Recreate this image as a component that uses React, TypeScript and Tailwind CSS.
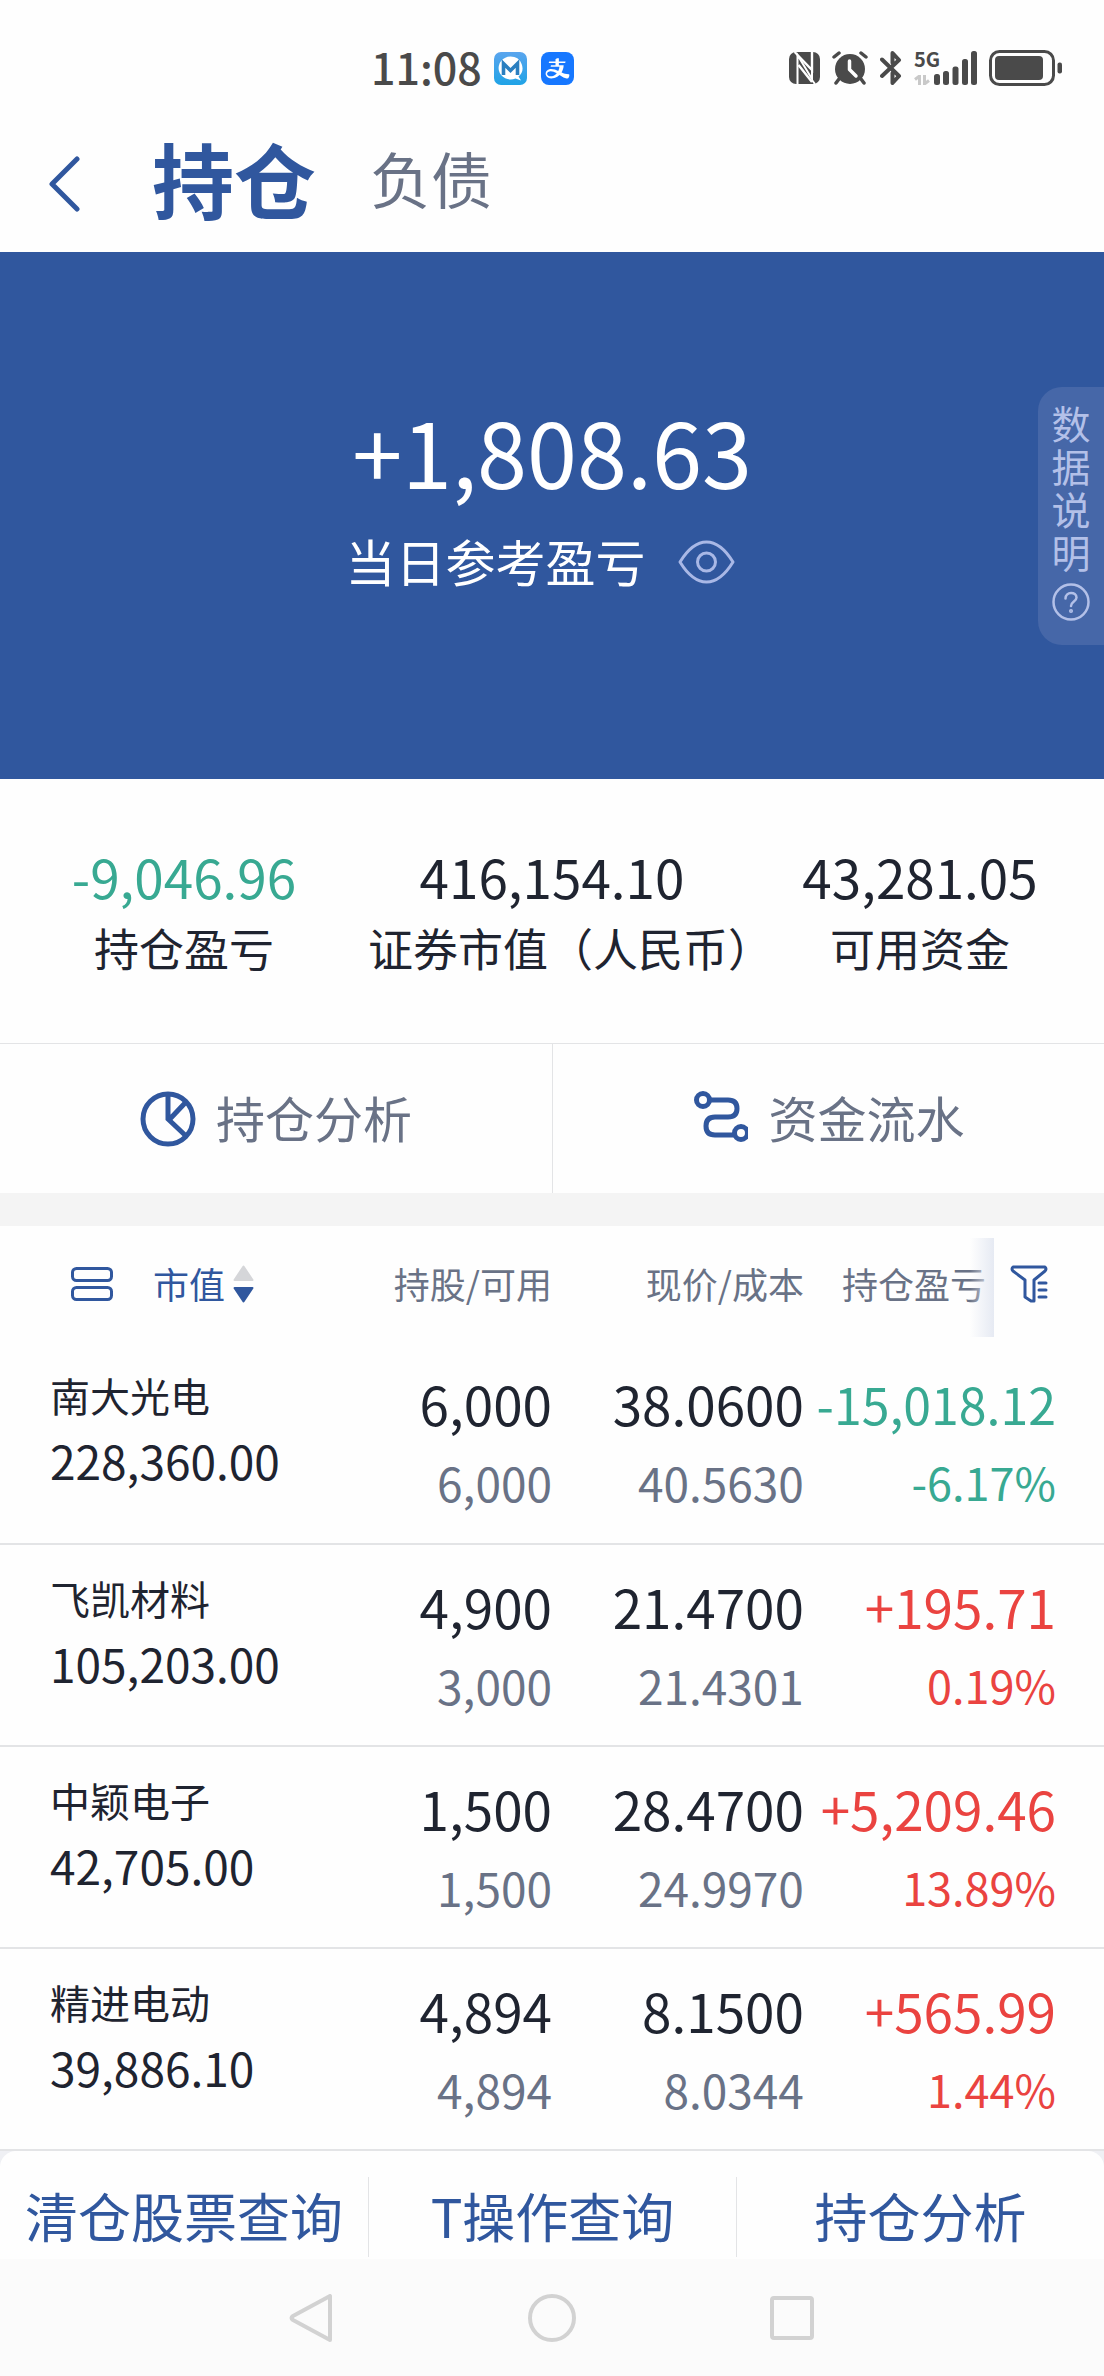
import type { ReactNode } from "react";
import { AiFillAlipaySquare } from "react-icons/ai";

type Holding = {
  name: string;
  marketValue: string;
  shares: string;
  available: string;
  price: string;
  cost: string;
  profit: string;
  rate: string;
};

const holdings: Holding[] = [
  { name: "南大光电", marketValue: "228,360.00", shares: "6,000", available: "6,000", price: "38.0600", cost: "40.5630", profit: "-15,018.12", rate: "-6.17%" },
  { name: "飞凯材料", marketValue: "105,203.00", shares: "4,900", available: "3,000", price: "21.4700", cost: "21.4301", profit: "+195.71", rate: "0.19%" },
  { name: "中颖电子", marketValue: "42,705.00", shares: "1,500", available: "1,500", price: "28.4700", cost: "24.9970", profit: "+5,209.46", rate: "13.89%" },
  { name: "精进电动", marketValue: "39,886.10", shares: "4,894", available: "4,894", price: "8.1500", cost: "8.0344", profit: "+565.99", rate: "1.44%" },
];

function StatusBar() {
  return (
    <div className="flex h-[112px] items-center justify-between pt-6 pr-[42px] pl-[371px] text-[#4a4a4a]">
      <div className="flex items-center">
        <span className="mr-3 pb-1 text-[43px] leading-[48px] font-medium">11:08</span>
        <svg className="mr-3.5 size-[33px]" viewBox="0 0 33 33" aria-hidden="true">
          <defs>
            <linearGradient id="mail" x1="0" y1="0" x2="0" y2="1">
              <stop offset="0" stopColor="#5aa5ee" />
              <stop offset="1" stopColor="#1fa3e6" />
            </linearGradient>
          </defs>
          <rect width="33" height="33" rx="7" fill="url(#mail)" />
          <path d="M16.5 4.5a12 11.5 0 1 0 5 22l5.5 2-2.500-4A12 11.500 0 0 0 16.500 4.500z" fill="#fff" />
          <path d="M9.500 23V11.500L16.500 18.500L23.500 11.500V23" fill="none" stroke="#2a7fc0" strokeWidth="3.600" />
        </svg>
        <span className="overflow-hidden rounded-lg">
          <AiFillAlipaySquare className="size-[33px] text-[#1677ff]" viewBox="112 112 800 800" aria-hidden="true" />
        </span>
      </div>
      <div className="flex items-center">
        <svg className="mr-3 h-8 w-[31px]" viewBox="0 0 31 32" aria-hidden="true">
          <rect width="31" height="32" rx="7" fill="currentColor" />
          <path d="M8.500 32V3L23 27V9" fill="none" stroke="#fff" strokeWidth="2" />
          <path d="M8.500 3L23 18V0M23 30L9.500 13" fill="none" stroke="#fff" strokeWidth="2.400" />
          <path d="M5.500 0L8.500 3M23 28L26 32" stroke="#fff" strokeWidth="2" />
        </svg>
        <svg className="mr-3 h-[34px] w-9" viewBox="0 0 36 34" fill="none" stroke="currentColor" strokeLinecap="round" aria-hidden="true">
          <circle cx="18" cy="18" r="15" fill="currentColor" stroke="none" />
          <path d="M2 6L7 2M34 6L29 2M7 28L4 32M29 28L32 32" strokeWidth="3.500" />
          <path d="M17.500 10V18.500L24 25" stroke="#fff" strokeWidth="3.500" strokeLinejoin="round" />
        </svg>
        <svg className="mr-3 h-[34px] w-[22px]" viewBox="0 0 22 34" fill="none" stroke="currentColor" strokeWidth="4" strokeLinecap="round" strokeLinejoin="round" aria-hidden="true">
          <path d="M2 8.500L19 25L12.500 32V22M12.500 12V2L19 9L2 25" />
        </svg>
        <div className="flex h-[34px] w-6 flex-col justify-between">
          <span className="text-[20px] leading-[16px] font-bold">5G</span>
          <svg className="h-2.5 w-4" viewBox="0 0 16 10" fill="none" stroke="#c9c9c9" strokeWidth="3" aria-hidden="true">
            <path d="M1 4.500L5.500 1V10M15 5.500L10.500 9V0" />
          </svg>
        </div>
        <svg className="mr-3 -ml-1 h-[34px] w-[43px]" viewBox="0 0 43 34" fill="currentColor" aria-hidden="true">
          <rect x="0" y="23" width="6" height="11" rx="2.500" />
          <rect x="9" y="20" width="6" height="14" rx="2.500" />
          <rect x="18.500" y="15.500" width="6" height="18.500" rx="2.500" />
          <rect x="28" y="8" width="6" height="26" rx="2.500" />
          <rect x="37" y="0" width="6" height="34" rx="2.500" />
        </svg>
        <svg className="h-9 w-[73px]" viewBox="0 0 73 36" aria-hidden="true">
          <rect x="1.500" y="1.500" width="63" height="33" rx="9" fill="none" stroke="currentColor" strokeWidth="3" />
          <rect x="6" y="6" width="48" height="24" rx="4" fill="currentColor" />
          <rect x="68.500" y="12.500" width="4.500" height="11" rx="2" fill="currentColor" />
        </svg>
      </div>
    </div>
  );
}

function Header() {
  return (
    <header className="flex h-[140px] items-center">
      <button type="button" aria-label="返回" className="ml-12 pt-1 text-[#30579e]">
        <svg className="h-14 w-8" viewBox="0 0 32 56" fill="none" stroke="currentColor" strokeWidth="5" strokeLinecap="round" strokeLinejoin="round">
          <path d="M29 3L4 28L29 53" />
        </svg>
      </button>
      <nav className="flex items-center pb-2 pl-[72px]">
        <button type="button" className="text-[82px] leading-[96px] font-bold text-[#30579e]">持仓</button>
        <button type="button" className="ml-[54px] text-[61px] leading-[96px] text-[#697286]">负债</button>
      </nav>
    </header>
  );
}

function Hero() {
  return (
    <section className="relative bg-[#30579e] pt-[138px] pb-[169px] text-center text-white">
      <p className="text-[90px] leading-[120px]">+1,808.63</p>
      <div className="flex h-[100px] items-center justify-center pr-6">
        <span className="text-[50px] leading-[100px]">当日参考盈亏</span>
        <button type="button" aria-label="隐藏金额" className="ml-8 pt-1 text-[#a9b8e6]">
          <svg className="h-11 w-[57px]" viewBox="0 0 57 44" fill="none" stroke="currentColor" strokeWidth="3">
            <path d="M2 22C10 9 19 2 28.500 2S47 9 55 22C47 35 38 42 28.500 42S10 35 2 22Z" strokeLinejoin="round" />
            <circle cx="28.500" cy="22" r="9" />
          </svg>
        </button>
      </div>
      <button type="button" className="absolute top-[135px] right-0 flex w-[66px] flex-col items-center rounded-l-3xl bg-[#4667a8] pt-3.5 pb-6 text-[39px] leading-[43px] text-[#b3c0e8]">
        <span className="w-10 break-all">数据说明</span>
        <svg className="mt-2.5 size-[38px]" viewBox="0 0 38 38" fill="none" stroke="currentColor" strokeWidth="2.500" strokeLinecap="round" aria-hidden="true">
          <circle cx="19" cy="19" r="17.500" />
          <path d="M13.500 15.500C13.500 8 24.500 8.500 24.500 14.500C24.500 18.500 19 18.500 19 23" />
          <circle cx="19" cy="28" r="0.800" />
        </svg>
      </button>
    </section>
  );
}

function Stat({ value, label, color }: { value: string; label: string; color: string }) {
  return (
    <div className="text-center">
      <p className={`text-[53px] leading-[72px] ${color}`}>{value}</p>
      <p className="text-[45px] leading-[72px] whitespace-nowrap text-[#1f2430]">{label}</p>
    </div>
  );
}

function Shortcut({ label, children }: { label: string; children: ReactNode }) {
  return (
    <button type="button" className="flex h-[149px] items-center justify-center gap-5 border-l border-[#e3e4e6] text-[49px] leading-[64px] text-[#697286] first:border-l-0">
      {children}
      <span className="-mt-1">{label}</span>
    </button>
  );
}

function HoldingsTable() {
  return (
    <table className="w-full table-fixed border-collapse text-right text-[#1f2430]">
      <colgroup>
        <col className="w-[27%]" />
        <col className="w-[23%]" />
        <col className="w-[23%]" />
        <col className="w-[27%]" />
      </colgroup>
      <thead className="text-[36px] leading-[48px] text-[#697286]">
        <tr className="h-[116px]">
          <th className="p-0 text-left font-normal">
            <div className="flex items-center pl-[71px] text-[#30579e]">
              <button type="button" aria-label="切换列表样式">
                <svg className="h-[34px] w-[42px]" viewBox="0 0 42 34" fill="none" stroke="currentColor" strokeWidth="3">
                  <rect x="1.500" y="1.500" width="39" height="12" rx="4" />
                  <rect x="1.500" y="20.500" width="39" height="12" rx="4" />
                </svg>
              </button>
              <button type="button" className="ml-10 flex items-center gap-2">
                <span className="-mt-0.5">市值</span>
                <svg className="h-[38px] w-[21px]" viewBox="0 0 21 38" aria-hidden="true">
                  <path d="M10.500 1.500L19.500 15H1.500Z" fill="#d5d6d9" stroke="#d5d6d9" strokeWidth="2" strokeLinejoin="round" />
                  <path d="M1.500 23H19.500L10.500 36.500Z" fill="#30579e" stroke="#30579e" strokeWidth="2" strokeLinejoin="round" />
                </svg>
              </button>
            </div>
          </th>
          <th className="p-0 pb-0.5 font-normal">持股/可用</th>
          <th className="p-0 pr-0.5 pb-0.5 font-normal">现价/成本</th>
          <th className="relative p-0 font-normal">
            <div className="flex items-center justify-end pr-14">
              <span className="-mt-0.5">持仓盈亏</span>
              <button type="button" aria-label="筛选" className="ml-6 text-[#30579e]">
                <svg className="size-[38px]" viewBox="0 0 38 38" fill="none" stroke="currentColor" strokeWidth="3" strokeLinecap="round" strokeLinejoin="round">
                  <path d="M3 2H35Q37 4 35 6L24 15V36H21L15 32V15L3 6Q1 4 3 2Z" />
                  <path d="M29 18H36M29 25H36M29 32H36" />
                </svg>
              </button>
            </div>
            <span className="pointer-events-none absolute top-3 right-[110px] h-[99px] w-6 bg-linear-to-r from-[#e6eaf3]/0 to-[#e6eaf3]" />
          </th>
        </tr>
      </thead>
      <tbody>
        {holdings.map((h) => {
          const tone = h.profit.startsWith("-") ? "text-[#38a992]" : "text-[#ea4340]";
          const profitSize = h.profit.length > 9 ? "text-[50px]" : "text-[53px]";
          return (
            <tr key={h.name} className="h-[202px] border-b-2 border-[#e3e4e6] align-top">
              <td className="p-0 pt-[21px] pl-[50px] text-left">
                <div className="text-[40px] leading-[64px]">{h.name}</div>
                <div className="text-[46px] leading-[66px]">{h.marketValue}</div>
              </td>
              <td className="p-0 pt-[21px]">
                <div className="text-[53px] leading-[80px]">{h.shares}</div>
                <div className="text-[46px] leading-[78px] text-[#697286]">{h.available}</div>
              </td>
              <td className="p-0 pt-[21px] pr-0.5">
                <div className="text-[53px] leading-[80px]">{h.price}</div>
                <div className="text-[46px] leading-[78px] text-[#697286]">{h.cost}</div>
              </td>
              <td className={`p-0 pt-[21px] pr-12 ${tone}`}>
                <div className={`${profitSize} leading-[80px]`}>{h.profit}</div>
                <div className="text-[45px] leading-[78px]">{h.rate}</div>
              </td>
            </tr>
          );
        })}
      </tbody>
    </table>
  );
}

function BottomActions() {
  return (
    <div className="bg-[#eff0f4]">
      <div className="grid grid-cols-3 rounded-t-2xl bg-[#fefefe] pt-[26px] pb-[2px]">
        {["清仓股票查询", "T操作查询", "持仓分析"].map((label) => (
          <button key={label} type="button" className="h-20 border-l border-[#e3e4e6] pb-1 text-[53px] leading-[76px] whitespace-nowrap text-[#30579e] first:border-l-0">
            {label}
          </button>
        ))}
      </div>
    </div>
  );
}

function SystemNav() {
  return (
    <nav className="flex h-[117px] items-center justify-center gap-[192px] bg-[#fbfbfb] text-[#d2d2d2]">
      <button type="button" aria-label="返回上一页">
        <svg className="size-12" viewBox="0 0 48 48" fill="none" stroke="currentColor" strokeWidth="4" strokeLinejoin="round">
          <path d="M42 2V46L5 26Q2 24 5 22Z" />
        </svg>
      </button>
      <button type="button" aria-label="主屏幕">
        <svg className="size-12" viewBox="0 0 48 48" fill="none" stroke="currentColor" strokeWidth="4">
          <circle cx="24" cy="24" r="22" />
        </svg>
      </button>
      <button type="button" aria-label="最近任务">
        <svg className="size-12" viewBox="0 0 48 48" fill="none" stroke="currentColor" strokeWidth="4">
          <rect x="4" y="4" width="40" height="40" rx="2" />
        </svg>
      </button>
    </nav>
  );
}

export default function App() {
  return (
    <main lang="zh-CN" className="min-h-screen bg-[#fefefe] font-['Noto_Sans_CJK_SC',sans-serif]">
      <StatusBar />
      <Header />
      <Hero />
      <section className="grid grid-cols-3 pt-[61px] pb-[59px]">
        <Stat value="-9,046.96" label="持仓盈亏" color="text-[#38a992]" />
        <Stat value="416,154.10" label="证券市值（人民币）" color="text-[#1f2430]" />
        <Stat value="43,281.05" label="可用资金" color="text-[#1f2430]" />
      </section>
      <section className="grid grid-cols-2 border-y border-t-[#e3e4e6] border-b-[#f4f4f4]">
        <Shortcut label="持仓分析">
          <svg className="size-14 text-[#30579e]" viewBox="0 0 56 56" fill="none" stroke="currentColor" strokeWidth="5" aria-hidden="true">
            <circle cx="28" cy="28" r="25" />
            <path d="M28 3V28L46 45M28 30L46 11" />
          </svg>
        </Shortcut>
        <Shortcut label="资金流水">
          <svg className="size-14 text-[#30579e]" viewBox="0 0 56 56" fill="none" stroke="currentColor" strokeWidth="5" aria-hidden="true">
            <circle cx="11" cy="9" r="6.500" />
            <circle cx="49" cy="42" r="6.500" />
            <path d="M18 9H36Q45 9 45 17.500T36 26H23Q14 26 14 35T23 44H42" />
          </svg>
        </Shortcut>
      </section>
      <div className="h-8 bg-[#f4f4f4]" />
      <HoldingsTable />
      <BottomActions />
      <SystemNav />
    </main>
  );
}
